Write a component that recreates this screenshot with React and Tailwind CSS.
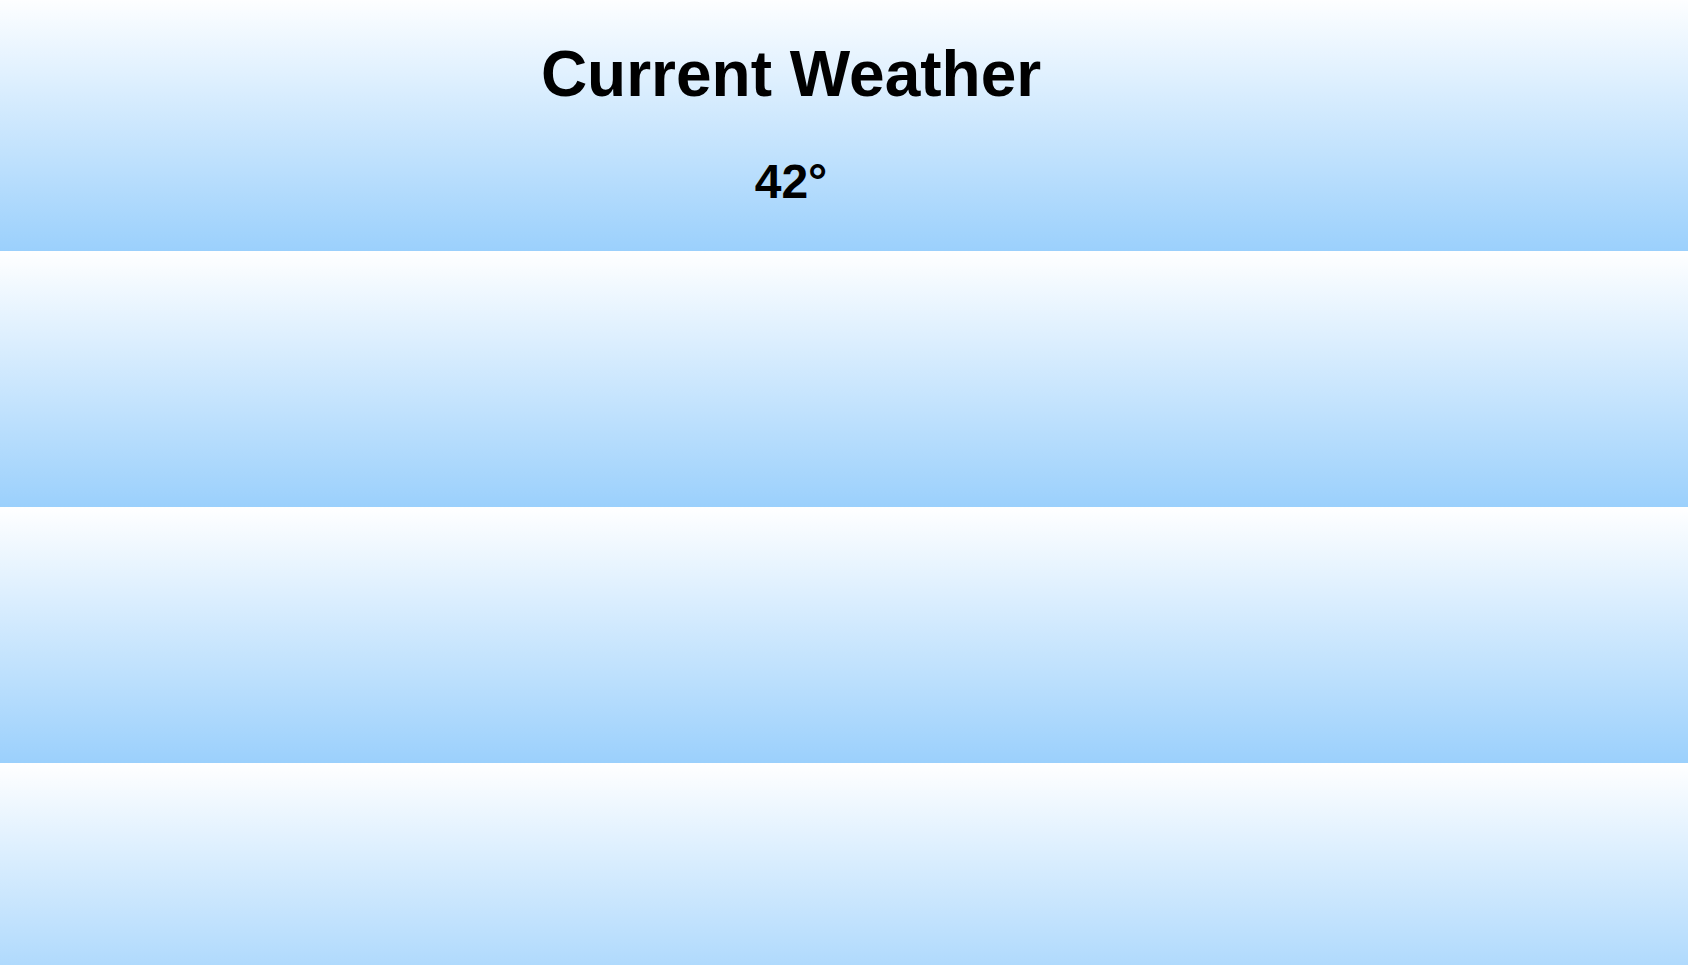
function App() {
  const temp = 42;

  return (
    <div
      className="min-h-screen w-full bg-[linear-gradient(to_bottom,#ffffff,#9bd0fc)] bg-[length:100%_256px] bg-[position:0_-5px] bg-repeat-y font-['Liberation_Sans',Arial,sans-serif] text-black"
    >
      {/* weather header */}
      <div className="flex flex-col items-center pr-[106px] pt-[42px]">
        <h1 className="text-[64px] font-bold leading-none">Current Weather</h1>
        <p className="mt-[52px] text-5xl font-bold leading-none">{temp}°</p>
      </div>
    </div>
  );
}

export default App;
